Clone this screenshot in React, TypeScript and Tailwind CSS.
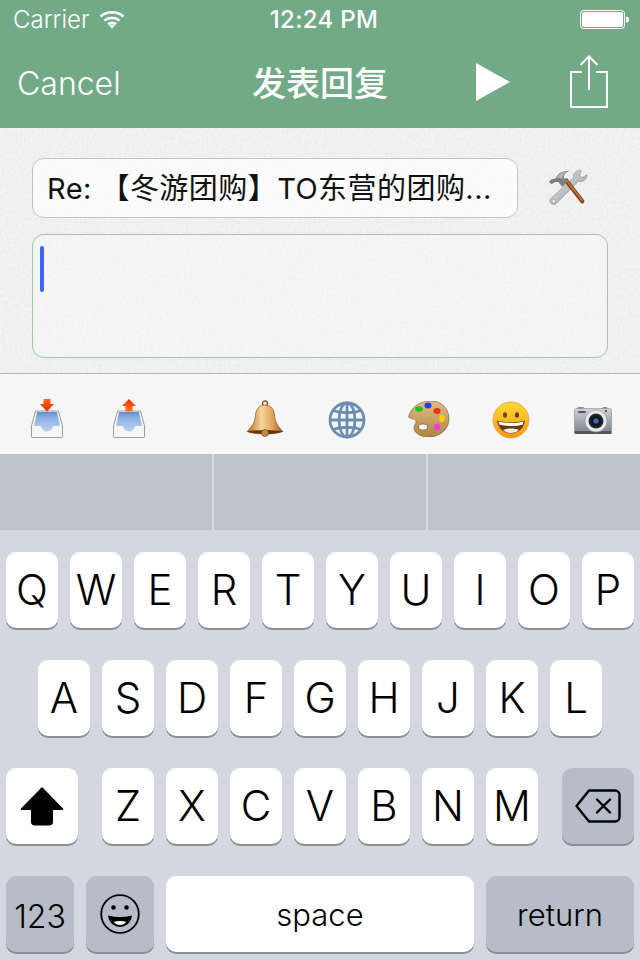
import React from 'react';

const row1 = ['Q', 'W', 'E', 'R', 'T', 'Y', 'U', 'I', 'O', 'P'];
const row2 = ['A', 'S', 'D', 'F', 'G', 'H', 'J', 'K', 'L'];
const row3 = ['Z', 'X', 'C', 'V', 'B', 'N', 'M'];

function Key({ label }: { label: string }) {
  return (
    <div className="w-[52px] h-[76px] bg-white rounded-[10px] shadow-[0_2px_0_#8b8e94] flex items-center justify-center text-[42px] leading-none text-black font-[350]">
      {label}
    </div>
  );
}

function Wifi() {
  return (
    <svg width="26" height="20" viewBox="0 0 26 20" fill="none" stroke="white" strokeWidth="2.6">
      <path d="M1.5 6.5C8 .8 18 .8 24.5 6.5" />
      <path d="M5.5 10.6C10 7 16 7 20.5 10.6" />
      <path d="M9 14.2c2.4-1.6 5.6-1.6 8 0" />
      <path d="M10.2 15.4L13 18.6l2.8-3.2c-1.6-1-4-1-5.6 0z" fill="white" stroke="none" />
    </svg>
  );
}

function Battery() {
  return (
    <svg width="49" height="20" viewBox="0 0 49 20">
      <rect x="0.5" y="0.5" width="44" height="18" rx="3" fill="none" stroke="white" />
      <rect x="2" y="2" width="41" height="15" rx="2" fill="white" />
      <path d="M46 6.5c2 0 3 1 3 3s-1 3-3 3z" fill="white" />
    </svg>
  );
}

function Share() {
  return (
    <svg width="38" height="53" viewBox="0 0 38 53" fill="none" stroke="white" strokeWidth="2">
      <path d="M12 17H1v35h36V17H26" />
      <path d="M19 35V2" />
      <path d="M10.5 10L19 1.500 27.500 10" />
    </svg>
  );
}

function Tools() {
  return (
    <svg width="40" height="38" viewBox="0 0 42 40">
      <defs>
        <linearGradient id="steel" x1="0" y1="0" x2="1" y2="1">
          <stop offset="0" stopColor="#dfe1e3" />
          <stop offset="1" stopColor="#9a9ea1" />
        </linearGradient>
      </defs>
      <path d="M31 3c-3 1-5 4-4 7L3 32c-2 2-1 5 1 6 2 1 4 0 5-1l23-23c3 1 6 0 8-3 1-2 1-3 1-4l-5 3-3-2 2-5c-1-1-3-1-4 0z" fill="url(#steel)" stroke="#8d9194" strokeWidth="0.7" />
      <circle cx="6" cy="35" r="1.800" fill="#f6f6f6" stroke="#8a8e93" strokeWidth="0.6" />
      <path d="M19 13L36 35" stroke="#7a3d18" strokeWidth="4.400" strokeLinecap="round" />
      <path d="M19 12.500L36 34.500" stroke="#c4743a" strokeWidth="2" strokeLinecap="round" />
      <path d="M1 15l2-3 5-1c2-5 7-8 15-8-5 2-7 5-6 8l3 4-5 5-4-5c-3-1-5 0-7 2z" fill="#7b8085" />
      <path d="M9 10c3-4 7-6 11-6-3 2-5 4-5 7z" fill="#b4b8bb" />
    </svg>
  );
}

function Tray({ up }: { up?: boolean }) {
  const id = up ? 'trayU' : 'trayD';
  return (
    <svg width="36" height="42" viewBox="0 0 36 42">
      <defs>
        <linearGradient id={id} x1="0" y1="0" x2="0" y2="1">
          <stop offset="0" stopColor="#6a8cc8" />
          <stop offset="0.3" stopColor="#8fb0e4" />
          <stop offset="1" stopColor="#bcd2f4" />
        </linearGradient>
        <linearGradient id={`${id}a`} x1="0" y1="0" x2="0" y2="1">
          <stop offset="0" stopColor={up ? '#ff2a00' : '#ff6a10'} />
          <stop offset="1" stopColor={up ? '#ff7a1a' : '#ee2200'} />
        </linearGradient>
      </defs>
      <path d="M6.500 13h23l4 15v10.500a1 1 0 0 1-1 1h-29a1 1 0 0 1-1-1V28z" fill="#f4f6f8" stroke="#9a9ea3" strokeWidth="1" />
      <path d="M8 14h20l3 14H24c-1 4-3 5.500-6 5.500S13 32 12 28H5z" fill={`url(#${id})`} />
      {up ? (
        <path d="M18 1l7 7h-3.500v5.500h-7V8H11z" fill={`url(#${id}a)`} />
      ) : (
        <path d="M14.500 1h7v5H25l-7 7.500L11 6h3.500z" fill={`url(#${id}a)`} />
      )}
    </svg>
  );
}

function Bell() {
  return (
    <svg width="38" height="38" viewBox="0 0 38 38">
      <defs>
        <linearGradient id="bellG" x1="0" y1="0" x2="1" y2="0">
          <stop offset="0" stopColor="#b06c20" />
          <stop offset="0.4" stopColor="#f8d49a" />
          <stop offset="0.75" stopColor="#dc9c50" />
          <stop offset="1" stopColor="#8a5318" />
        </linearGradient>
      </defs>
      <circle cx="19" cy="3.500" r="2.500" fill="none" stroke="#8a5a24" strokeWidth="1.400" />
      <path d="M19 5c-6 0-9 4-9.500 10-.5 7-3 11-8.500 16.500 5 2 12 2.500 18 2.500s13-.5 18-2.500C31.500 26 29 22 28.500 15 28 9 25 5 19 5z" fill="url(#bellG)" stroke="#7a4d1a" strokeWidth="0.6" />
      <path d="M1 31.500c5 2 12 2.500 18 2.500s13-.5 18-2.500c-5-1-12-1.500-18-1.500s-13 .5-18 1.500z" fill="#5e3a12" />
      <circle cx="19" cy="33" r="3.500" fill="#c08a48" stroke="#6b4316" strokeWidth="0.6" />
    </svg>
  );
}

function Globe() {
  return (
    <svg width="38" height="38" viewBox="0 0 38 38" fill="none" stroke="#6c8fb0" strokeWidth="2.800">
      <circle cx="19" cy="19" r="17" />
      <ellipse cx="19" cy="19" rx="8" ry="17" />
      <path d="M19 2v34M2 19h34M5 9.500c8 3 20 3 28 0M5 28.500c8-3 20-3 28 0" />
    </svg>
  );
}

function Palette() {
  return (
    <svg width="42" height="36" viewBox="0 0 42 36">
      <defs>
        <linearGradient id="palG" x1="0" y1="0" x2="0" y2="1">
          <stop offset="0" stopColor="#e0bd84" />
          <stop offset="1" stopColor="#b08444" />
        </linearGradient>
      </defs>
      <path d="M.5 16C3 6 12 0 23 0c11 0 18 8 18 18s-9 18-20 18c-8 0-14-3-15-9-.5-3 3-5 2-7.500-1-2-5-1.500-7.500-3.500z" fill="url(#palG)" stroke="#7a5426" strokeWidth="0.6" />
      <ellipse cx="15" cy="26" rx="4.500" ry="3" fill="#fafafa" stroke="#6f4c22" strokeWidth="0.6" />
      <ellipse cx="11" cy="8" rx="3.800" ry="2.800" fill="#22c020" />
      <ellipse cx="20" cy="4.500" rx="3.500" ry="3" fill="#2040f0" />
      <ellipse cx="29" cy="10" rx="3.500" ry="3" fill="#f03010" />
      <ellipse cx="34" cy="17.500" rx="2.800" ry="3.500" fill="#fcd010" />
      <ellipse cx="29" cy="26" rx="3.200" ry="3.400" fill="#f040d8" />
    </svg>
  );
}

function Smile() {
  return (
    <svg width="38" height="38" viewBox="0 0 38 38">
      <defs>
        <linearGradient id="smG" x1="0" y1="0" x2="0" y2="1">
          <stop offset="0" stopColor="#fdd835" />
          <stop offset="1" stopColor="#f89a10" />
        </linearGradient>
      </defs>
      <circle cx="19" cy="19" r="18" fill="url(#smG)" stroke="#e0a460" strokeWidth="0.8" />
      <ellipse cx="13" cy="14" rx="2" ry="2.800" fill="#6a4012" />
      <ellipse cx="25" cy="14" rx="2" ry="2.800" fill="#6a4012" />
      <path d="M5 19.500c9 2.500 19 2.500 28 0-1 8-7 13-14 13S6 27.500 5 19.500z" fill="#6a3a10" />
      <path d="M6.500 20.500c8 2 17 2 25 0l-.6 3c-7 2-17 2-23.800 0z" fill="#fff" />
      <path d="M11 29c5-2 11-2 16 0-2 2-5 3-8 3s-6-1-8-3z" fill="#f4f0e8" />
    </svg>
  );
}

function Camera() {
  return (
    <svg width="38" height="30" viewBox="0 0 38 30">
      <defs>
        <linearGradient id="camG" x1="0" y1="0" x2="0" y2="1">
          <stop offset="0" stopColor="#cfd3d8" />
          <stop offset="1" stopColor="#7c8187" />
        </linearGradient>
        <radialGradient id="lensG">
          <stop offset="0" stopColor="#3a5aa0" />
          <stop offset="0.5" stopColor="#101418" />
          <stop offset="1" stopColor="#2a2d30" />
        </radialGradient>
      </defs>
      <path d="M3 3h6l1-2h-6z" fill="#8c9095" />
      <path d="M28 3h6l-1-2h-4z" fill="#8c9095" />
      <rect x="0.500" y="2.500" width="37" height="25" rx="2" fill="url(#camG)" stroke="#85898e" strokeWidth="0.6" />
      <rect x="0.500" y="25" width="37" height="3" rx="1" fill="#55595e" />
      <rect x="4" y="5" width="8" height="2" rx="1" fill="#55595e" />
      <circle cx="32" cy="5" r="1" fill="#2a2d30" />
      <circle cx="22" cy="15" r="11" fill="#e7e9ea" stroke="#8a8e93" strokeWidth="0.6" />
      <circle cx="22" cy="15" r="7.500" fill="url(#lensG)" />
      <circle cx="22" cy="15" r="2.500" fill="#3f63b8" />
    </svg>
  );
}

function ShiftIcon() {
  return (
    <svg width="44" height="40" viewBox="0 0 44 40">
      <path d="M22 1L43 22.500c.5.800.2 1.500-.8 1.500H33v12c0 2-1.500 3.500-3.500 3.500h-15C12.500 39.500 11 38 11 36V24H1.800c-1 0-1.300-.7-.8-1.500z" fill="black" />
    </svg>
  );
}

function DeleteIcon() {
  return (
    <svg width="46" height="34" viewBox="0 0 46 34" fill="none" stroke="black" strokeWidth="2.400" strokeLinejoin="round" strokeLinecap="round">
      <path d="M14 1.500h26a4.500 4.500 0 0 1 4.500 4.500v22a4.500 4.500 0 0 1-4.500 4.500H14L1.500 17z" />
      <path d="M22 10.500l13 13M35 10.500l-13 13" />
    </svg>
  );
}

function KeyEmoji() {
  return (
    <svg width="40" height="40" viewBox="0 0 40 40">
      <circle cx="20" cy="20" r="18.800" fill="none" stroke="black" strokeWidth="1.800" />
      <circle cx="13.500" cy="13.500" r="2.300" fill="black" />
      <circle cx="26.500" cy="13.500" r="2.300" fill="black" />
      <path d="M8 21.500c8 2 16 2 24 0-.5 6.500-6 11.500-12 11.500S8.500 28 8 21.500z" fill="black" />
      <path d="M13.500 28c4-1.500 9-1.500 13 0-2 2-4 3-6.500 3s-4.500-1-6.500-3z" fill="white" />
    </svg>
  );
}

export default function App() {
  return (
    <div className="w-[640px] h-[960px] overflow-hidden flex flex-col bg-[#d3d7e0] font-['Inter','Noto_Sans_CJK_SC',sans-serif]">
      <header className="h-[128px] shrink-0 bg-[#72aa88] text-white flex flex-col">
        <div className="h-[40px] grid grid-cols-[1fr_auto_1fr] items-center pl-[13px] pr-[11px]">
          <div className="flex items-center gap-[9px] text-[24px] font-light leading-none">
            Carrier
            <Wifi />
          </div>
          <div className="pl-[6px] text-[24px] tracking-[0.3px] font-medium leading-none">12:24 PM</div>
          <div className="flex justify-end">
            <Battery />
          </div>
        </div>
        <div className="flex-1 grid grid-cols-[1fr_auto_1fr] items-center">
          <div className="pl-[17px] text-[32px] font-light leading-none">Cancel</div>
          <div className="text-[34px] font-medium leading-none">发表回复</div>
          <div className="flex items-center justify-end pr-[32px]">
            <svg width="34" height="38" viewBox="0 0 34 38" className="mr-[60px] mt-[-4px]">
              <path d="M0 0L34 19 0 38z" fill="white" />
            </svg>
            <div className="mt-[-5px]">
              <Share />
            </div>
          </div>
        </div>
      </header>

      <main className="relative h-[246px] shrink-0 bg-[#f3f3f3] border-b border-[#b4b4b4] overflow-hidden">
        {/* paper grain */}
        <svg className="absolute inset-0" width="640" height="246">
          <filter id="grain">
            <feTurbulence type="fractalNoise" baseFrequency="0.45 0.3" numOctaves="3" seed="4" />
            <feColorMatrix values="0 0 0 0 0.6  0 0 0 0 0.6  0 0 0 0 0.6  0 0 0 0.4 -0.13" />
          </filter>
          <rect width="640" height="246" filter="url(#grain)" />
        </svg>
        <div className="relative pt-[30px] px-[32px] flex flex-col gap-[16px]">
          <div className="flex items-center">
            <div className="w-[486px] h-[60px] rounded-[12px] border border-[#c4c4c4] bg-white/70 flex items-center pl-[14px] text-[29px] tracking-[0.45px] leading-none text-[#111] whitespace-nowrap">
              Re: 【冬游团购】TO东营的团购...
            </div>
            <div className="ml-[30px] mt-[-2px]">
              <Tools />
            </div>
          </div>
          <div className="w-[576px] h-[124px] rounded-[12px] border border-[#9cc9a6] bg-white/30 pt-[11px] pl-[7px]">
            <div className="w-[4px] h-[46px] rounded-full bg-[#3f66f0]" />
          </div>
        </div>
      </main>

      <div className="h-[80px] shrink-0 bg-[#f6f6f6] flex items-center pl-[6px]">
        <div className="w-[82px] flex justify-center mt-[10px]"><Tray /></div>
        <div className="w-[82px] flex justify-center mt-[10px]"><Tray up /></div>
        <div className="w-[54px]" />
        <div className="w-[82px] flex justify-center mt-[10px]"><Bell /></div>
        <div className="w-[82px] flex justify-center mt-[12px]"><Globe /></div>
        <div className="w-[82px] flex justify-center mt-[9px]"><Palette /></div>
        <div className="w-[82px] flex justify-center mt-[11px]"><Smile /></div>
        <div className="w-[82px] flex justify-center mt-[13px]"><Camera /></div>
      </div>

      <div className="h-[76px] shrink-0 bg-[#bcc3cc] flex">
        <div className="w-[214px] border-r-2 border-[#d3d7e0]" />
        <div className="w-[214px] border-r-2 border-[#d3d7e0]" />
      </div>

      <section className="flex-1 pt-[22px] flex flex-col gap-[32px]">
        <div className="flex justify-center gap-[12px]">
          {row1.map((k) => <Key key={k} label={k} />)}
        </div>
        <div className="flex justify-center gap-[12px]">
          {row2.map((k) => <Key key={k} label={k} />)}
        </div>
        <div className="flex justify-between px-[6px]">
          <div className="w-[72px] h-[76px] bg-white rounded-[10px] shadow-[0_2px_0_#8b8e94] flex items-center justify-center">
            <ShiftIcon />
          </div>
          <div className="flex gap-[12px]">
            {row3.map((k) => <Key key={k} label={k} />)}
          </div>
          <div className="w-[72px] h-[76px] bg-[#b6bdc9] rounded-[10px] shadow-[0_2px_0_#8b8e94] flex items-center justify-center">
            <DeleteIcon />
          </div>
        </div>
        <div className="flex gap-[12px] px-[6px]">
          <div className="w-[68px] h-[76px] bg-[#b6bdc9] rounded-[10px] shadow-[0_2px_0_#8b8e94] flex items-center justify-center pt-[5px] text-[32px] font-light text-black leading-none">
            123
          </div>
          <div className="w-[68px] h-[76px] bg-[#b6bdc9] rounded-[10px] shadow-[0_2px_0_#8b8e94] flex items-center justify-center">
            <KeyEmoji />
          </div>
          <div className="w-[308px] h-[76px] bg-white rounded-[10px] shadow-[0_2px_0_#8b8e94] flex items-center justify-center text-[31px] font-[350] text-black leading-none">
            space
          </div>
          <div className="w-[148px] h-[76px] bg-[#b6bdc9] rounded-[10px] shadow-[0_2px_0_#8b8e94] flex items-center justify-center text-[31px] font-[350] text-black leading-none">
            return
          </div>
        </div>
      </section>
    </div>
  );
}
